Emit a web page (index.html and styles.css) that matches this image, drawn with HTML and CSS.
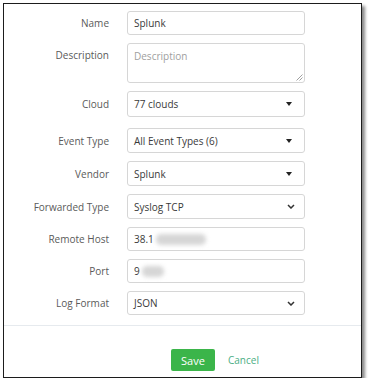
FILE: index.html
```html
<!DOCTYPE html>
<html lang="en">

<head>
    <meta charset="UTF-8">
    <meta name="viewport" content="width=device-width, initial-scale=1.0">
    <title>Forwarder</title>
    <link rel="stylesheet" href="styles.css">
</head>

<body>
    <div class="frame">
        <form class="fwd-form">
            <div class="row">
                <label class="label">Name</label>
                <div class="control">Splunk</div>
            </div>
            <div class="row row-top">
                <label class="label">Description</label>
                <div class="control control-area">
                    <span class="placeholder">Description</span>
                    <svg class="grip" width="7" height="7" viewBox="0 0 7 7">
                        <path d="M6.5 0.5 L0.5 6.5 M6.5 3.5 L3.5 6.5" stroke="#888" stroke-width="0.8" />
                    </svg>
                </div>
            </div>
            <div class="row row-cloud">
                <label class="label">Cloud</label>
                <div class="control control-drop">
                    <span>77 clouds</span>
                    <span class="caret"></span>
                </div>
            </div>
            <div class="row row-drop">
                <label class="label">Event Type</label>
                <div class="control control-drop">
                    <span>All Event Types (6)</span>
                    <span class="caret"></span>
                </div>
            </div>
            <div class="row row-drop">
                <label class="label">Vendor</label>
                <div class="control control-drop">
                    <span>Splunk</span>
                    <span class="caret"></span>
                </div>
            </div>
            <div class="row row-drop">
                <label class="label">Forwarded Type</label>
                <div class="control control-drop">
                    <span>Syslog TCP</span>
                    <svg class="chevron" width="8" height="5" viewBox="0 0 8 5">
                        <path d="M1 1 L4 4 L7 1" fill="none" stroke="#333" stroke-width="1.5" />
                    </svg>
                </div>
            </div>
            <div class="row">
                <label class="label">Remote Host</label>
                <div class="control">38.1<span class="blur blur-host"></span></div>
            </div>
            <div class="row">
                <label class="label">Port</label>
                <div class="control">9<span class="blur blur-port"></span></div>
            </div>
            <div class="row">
                <label class="label">Log Format</label>
                <div class="control control-drop">
                    <span>JSON</span>
                    <svg class="chevron" width="8" height="5" viewBox="0 0 8 5">
                        <path d="M1 1 L4 4 L7 1" fill="none" stroke="#333" stroke-width="1.5" />
                    </svg>
                </div>
            </div>
        </form>
        <div class="footer">
            <button class="btn-save" type="button">Save</button>
            <a class="btn-cancel" href="#">Cancel</a>
        </div>
    </div>
</body>

</html>
```

FILE: styles.css
```css
body {
    margin: 0;
    background: #fff;
    font-family: "Open Sans", "Liberation Sans", sans-serif;
    font-size: 10px;
    color: #333;
}

.frame {
    width: 357px;
    height: 373px;
    margin: 3px 0 0 3px;
    border: 1.5px solid #1c1c1c;
    box-shadow: 3px 3px 3px #8a8a8a;
    background: #fff;
}

.fwd-form {
    display: flex;
    flex-direction: column;
    gap: 8px;
    padding: 7px 0 10px;
}

.row {
    display: flex;
    align-items: center;
    gap: 18px;
}

.row-top {
    align-items: flex-start;
}

.row-top .label {
    padding-top: 5px;
}

.row-cloud {
    margin-bottom: 3px;
}

.label {
    width: 105px;
    text-align: right;
    color: #5a5a5a;
}

.control {
    box-sizing: border-box;
    width: 178px;
    height: 24px;
    padding: 0 6px;
    border: 1px solid #d6d6d6;
    border-radius: 3px;
    display: flex;
    align-items: center;
    color: #3a3a3a;
}

.control-area {
    position: relative;
    height: 40px;
    align-items: flex-start;
    padding-top: 5px;
}

.placeholder {
    color: #a0a0a0;
}

.grip {
    position: absolute;
    right: 1px;
    bottom: 1px;
}

.row-cloud .control {
    height: 26px;
}

.row-drop .control {
    height: 25px;
}

.control-drop {
    justify-content: space-between;
    padding-right: 9px;
}

.caret {
    width: 0;
    height: 0;
    border-left: 3px solid transparent;
    border-right: 3px solid transparent;
    border-top: 4px solid #222;
    margin-right: 3px;
}

.blur {
    display: inline-block;
    height: 11px;
    background: #d6d6d6;
    border-radius: 5px;
    filter: blur(2px);
}

.blur-host {
    width: 50px;
    margin-left: 2px;
}

.blur-port {
    width: 22px;
    margin-left: 2px;
}

.footer {
    border-top: 1px solid #e6eaee;
    display: flex;
    align-items: center;
    padding: 23px 0 0 167px;
    gap: 13px;
}

.btn-save {
    width: 44px;
    height: 22px;
    border: none;
    border-radius: 2px;
    background: #3bb54a;
    color: #fff;
    font-family: inherit;
    font-size: 11px;
    padding: 0;
}

.btn-cancel {
    color: #4aae84;
    text-decoration: none;
    font-size: 10px;
}
```
